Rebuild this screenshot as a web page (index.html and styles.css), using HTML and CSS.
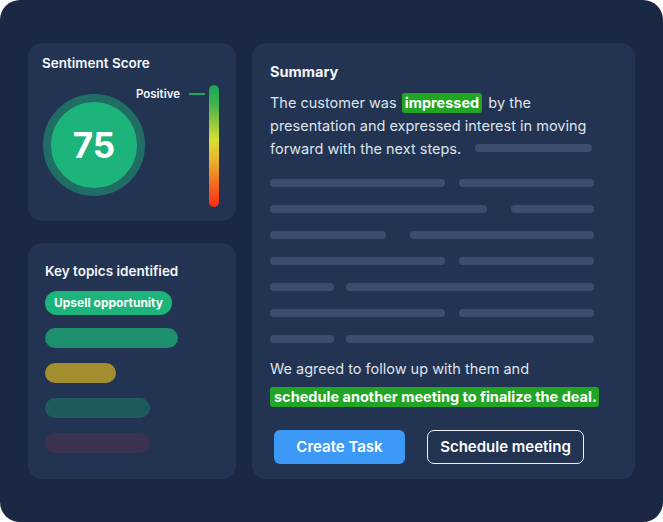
FILE: index.html
```html
<!DOCTYPE html>
<html lang="en">
<head>
<meta charset="utf-8">
<title>Call summary</title>
<link rel="stylesheet" href="styles.css">
</head>
<body>
<div class="frame">
  <div class="left-col">
    <section class="card score-card">
      <h2 class="card-title">Sentiment Score</h2>
      <div class="gauge-row">
        <div class="dial"><span class="dial-value">75</span></div>
        <div class="scale">
          <div class="scale-label"><span>Positive</span><i class="scale-tick"></i></div>
        </div>
      </div>
    </section>
    <section class="card topics-card">
      <h2 class="card-title">Key topics identified</h2>
      <div class="topics">
        <span class="pill">Upsell opportunity</span>
        <span class="topic-bar bar-green"></span>
        <span class="topic-bar bar-olive"></span>
        <span class="topic-bar bar-teal"></span>
        <span class="topic-bar bar-plum"></span>
      </div>
    </section>
  </div>
  <section class="card summary-card">
    <h2 class="summary-title">Summary</h2>
    <p class="lead">The customer was <mark class="hl-word">impressed</mark> by the<br>presentation and expressed interest in moving<br>forward with the next steps.<span class="inline-skel"></span></p>
    <div class="skeleton">
      <div class="skel-row"><span class="s s175"></span><span class="s s135"></span></div>
      <div class="skel-row gap24"><span class="s s217"></span><span class="s s83"></span></div>
      <div class="skel-row gap24"><span class="s s116"></span><span class="s s184"></span></div>
      <div class="skel-row"><span class="s s175"></span><span class="s s135"></span></div>
      <div class="skel-row gap12"><span class="s s64"></span><span class="s s248"></span></div>
      <div class="skel-row"><span class="s s175"></span><span class="s s135"></span></div>
      <div class="skel-row gap12"><span class="s s64"></span><span class="s s248"></span></div>
    </div>
    <p class="follow">We agreed to follow up with them and<br><mark class="hl-line">schedule another meeting to finalize the deal.</mark></p>
    <div class="actions">
      <button class="btn btn-primary">Create Task</button>
      <button class="btn btn-outline">Schedule meeting</button>
    </div>
  </section>
</div>
</body>
</html>
```
FILE: styles.css
```css
* { box-sizing: border-box; }
html, body { margin: 0; padding: 0; background: #ffffff; }
body { font-family: "Inter", "Noto Sans", sans-serif; }

.frame {
  width: 663px;
  height: 522px;
  border-radius: 20px;
  background: #1b2843;
  padding: 43px 28px;
  display: flex;
  gap: 16px;
}

.card {
  background: #233453;
  border-radius: 14px;
}

.left-col {
  width: 208px;
  display: flex;
  flex-direction: column;
  gap: 22px;
}

.card-title {
  margin: 0;
  font-size: 13.5px;
  line-height: 16px;
  font-weight: 600;
  color: #f4f6fa;
}

/* Sentiment score */
.score-card {
  height: 178px;
  padding: 12px 17px 0 14px;
}
.gauge-row {
  margin-top: 14px;
  display: flex;
  justify-content: space-between;
  align-items: flex-start;
}
.dial {
  margin-top: 9px;
  margin-left: 1px;
  width: 102px;
  height: 102px;
  border-radius: 50%;
  border: 8px solid #1f6d63;
  background: #1cb47a;
  display: flex;
  align-items: center;
  justify-content: center;
}
.dial-value {
  color: #ffffff;
  font-size: 35px;
  font-weight: 700;
  line-height: 1;
}
.scale {
  position: relative;
  width: 10px;
  height: 122px;
  border-radius: 5px;
  background: linear-gradient(to bottom, #17a659 0%, #3fb24d 15%, #8cc63f 30%, #d9e033 45%, #e9b22b 62%, #f26a22 82%, #ff2c10 100%);
}
.scale-label {
  position: absolute;
  right: calc(100% + 4px);
  top: 9px;
  transform: translateY(-50%);
  display: flex;
  align-items: center;
  gap: 9px;
  font-size: 11.5px;
  font-weight: 600;
  color: #f4f6fa;
  white-space: nowrap;
}
.scale-tick {
  display: block;
  width: 16px;
  height: 2px;
  background: #1aa85a;
}

/* Topics */
.topics-card {
  flex: 1;
  padding: 20px 17px 0 17px;
}
.topics {
  margin-top: 12px;
  display: flex;
  flex-direction: column;
  align-items: flex-start;
}
.pill {
  height: 24px;
  line-height: 24px;
  padding: 0 9px;
  border-radius: 12px;
  background: #1cb47a;
  color: #ffffff;
  font-size: 12px;
  font-weight: 700;
}
.topic-bar {
  display: block;
  height: 20px;
  border-radius: 10px;
  margin-top: 15px;
}
.pill + .topic-bar { margin-top: 13px; }
.bar-green { width: 133px; background: #1e8f6e; }
.bar-olive { width: 71px; background: #a28d2f; }
.bar-teal { width: 105px; background: #1f5b5d; }
.bar-plum { width: 105px; background: #3b3250; }

/* Summary */
.summary-card {
  flex: 1;
  padding: 20px 36px 0 18px;
  display: flex;
  flex-direction: column;
}
.summary-title {
  margin: 0;
  font-size: 14.5px;
  line-height: 18px;
  font-weight: 700;
  color: #f4f6fa;
}
.lead, .follow {
  margin: 0;
  font-size: 14.5px;
  color: #dfe3ec;
  font-weight: 400;
}
.lead {
  margin-top: 9.5px;
  line-height: 23px;
}
.hl-word {
  display: inline-block;
  background: #22a424;
  color: #ffffff;
  font-weight: 700;
  line-height: 20px;
  padding: 0 3px;
  border-radius: 3px;
  margin: 0 2px 0 1px;
}
.inline-skel {
  display: inline-block;
  width: 117px;
  height: 8px;
  border-radius: 4px;
  background: #3e4d6d;
  margin-left: 14px;
  vertical-align: 2px;
}
.skeleton {
  margin-top: 19px;
  display: flex;
  flex-direction: column;
  gap: 18px;
}
.skel-row {
  display: flex;
  gap: 14px;
}
.skel-row.gap24 { gap: 24px; }
.skel-row.gap12 { gap: 12px; }
.s {
  display: block;
  height: 8px;
  border-radius: 4px;
  background: #3e4d6d;
}
.s175 { width: 175px; }
.s135 { width: 135px; }
.s217 { width: 217px; }
.s83 { width: 83px; }
.s116 { width: 116px; }
.s184 { width: 184px; }
.s64 { width: 64px; }
.s248 { width: 248px; }

.follow {
  margin-top: 12px;
  line-height: 28px;
}
.hl-line {
  display: inline-block;
  background: #22a424;
  color: #ffffff;
  font-weight: 700;
  font-size: 14.5px;
  line-height: 20px;
  padding: 0 2px 0 4px;
  border-radius: 3px;
}

.actions {
  margin-top: 19px;
  padding-left: 4px;
  display: flex;
  gap: 22px;
}
.btn {
  height: 34px;
  border-radius: 6px;
  font-family: inherit;
  font-size: 15px;
  font-weight: 600;
  color: #ffffff;
  cursor: pointer;
}
.btn-primary {
  width: 131px;
  border: none;
  background: #3d99f6;
}
.btn-outline {
  width: 157px;
  background: transparent;
  border: 1px solid #f0f2f7;
  border-radius: 7px;
}
```
